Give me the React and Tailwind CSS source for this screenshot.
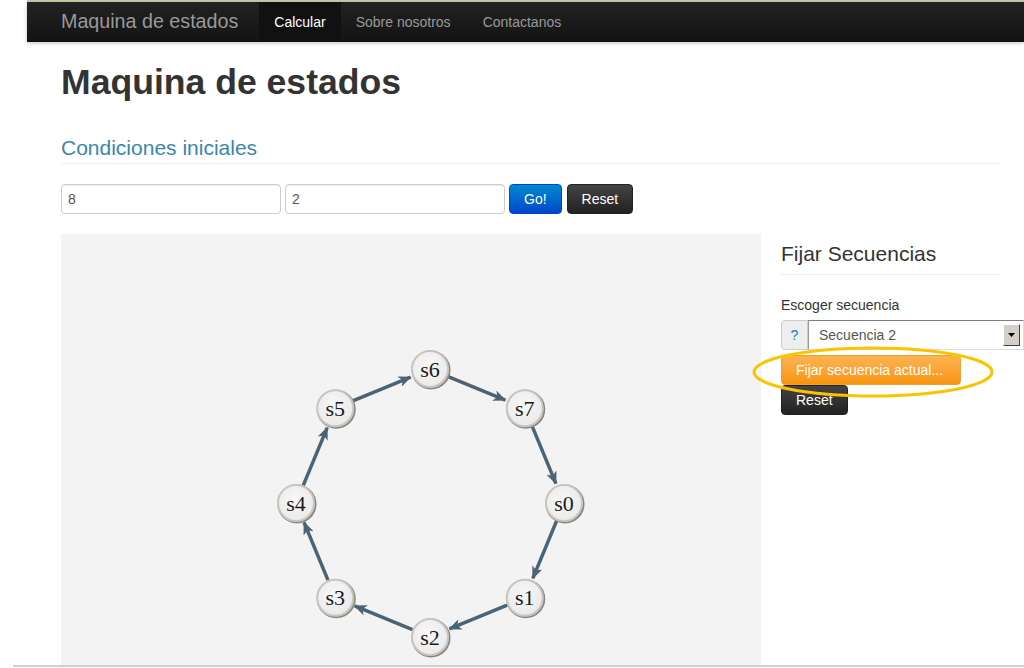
import React from 'react';

const nodes = [0, 1, 2, 3, 4, 5, 6, 7].map((k) => {
  const a = (k * Math.PI) / 4;
  return { id: k, x: 369 + 134 * Math.cos(a), y: 269 + 134 * Math.sin(a) };
});

const StateGraph = () => {
  const edges = nodes.map((n, i) => {
    const m = nodes[(i + 1) % nodes.length];
    const dx = m.x - n.x;
    const dy = m.y - n.y;
    const len = Math.sqrt(dx * dx + dy * dy);
    const ux = dx / len;
    const uy = dy / len;
    return {
      x1: n.x + ux * 19,
      y1: n.y + uy * 19,
      x2: m.x - ux * 21,
      y2: m.y - uy * 21,
    };
  });

  return (
    <svg width="700" height="431" viewBox="0 0 700 431">
      <defs>
        <marker id="arrow" viewBox="0 0 13 11" refX="12" refY="5.5" markerWidth="13" markerHeight="11" markerUnits="userSpaceOnUse" orient="auto">
          <path d="M0,0 L13,5.5 L0,11 L3.5,5.5 z" fill="#4c6474" />
        </marker>
        <radialGradient id="nodeFill" cx="45%" cy="40%" r="65%">
          <stop offset="0%" stopColor="#f7f7f7" />
          <stop offset="100%" stopColor="#e9e9e9" />
        </radialGradient>
        <filter id="soft" x="-20%" y="-20%" width="140%" height="140%">
          <feGaussianBlur stdDeviation="0.6" />
        </filter>
      </defs>

      {/* edges */}
      {edges.map((e, i) => (
        <line
          key={i}
          x1={e.x1}
          y1={e.y1}
          x2={e.x2}
          y2={e.y2}
          stroke="#4c6474"
          strokeWidth="3.5"
          markerEnd="url(#arrow)"
          filter="url(#soft)"
        />
      ))}

      {/* nodes */}
      {nodes.map((n) => (
        <g key={n.id}>
          <circle cx={n.x + 1} cy={n.y + 1} r="18.5" fill="none" stroke="#8a8680" strokeWidth="2" />
          <circle cx={n.x} cy={n.y} r="18" fill="url(#nodeFill)" stroke="#c9c5be" strokeWidth="2" />
          <text
            x={n.x}
            y={n.y + 7.5}
            textAnchor="middle"
            fontSize="22"
            fill="#1a1a1a"
            style={{ fontFamily: '"Liberation Serif", "Times New Roman", serif' }}
          >
            s{n.id}
          </text>
        </g>
      ))}
    </svg>
  );
};

const App = () => {
  return (
    <div className="flex h-[668px] w-[1024px] flex-col overflow-hidden bg-white font-['Liberation_Sans',Arial,sans-serif] text-[14px] text-[#333]">
      <div className="flex h-[665px] flex-col pl-[27px]">
        {/* top strip */}
        <div className="h-[2px] bg-[#c7cdac]" />

        {/* Navbar */}
        <nav className="relative z-10 h-[40px] bg-gradient-to-b from-[#222] to-[#131313] shadow-[0_1px_4px_rgba(0,0,0,0.25)]">
          <div className="ml-[34px] flex h-full items-stretch">
            <a className="pr-[21px] pt-[9px] text-[19.7px] leading-[20px] text-[#999]">Maquina de estados</a>
            <ul className="flex">
              <li className="bg-[#111] px-[15px] pt-[10px] leading-[20px] text-white">Calcular</li>
              <li className="pl-[15px] pr-[17px] pt-[10px] leading-[20px] text-[#999]">Sobre nosotros</li>
              <li className="px-[15px] pt-[10px] leading-[20px] text-[#999]">Contactanos</li>
            </ul>
          </div>
        </nav>

        {/* Main Content */}
        <main className="flex-1 overflow-hidden pl-[34px]">
          <div className="w-[940px]">
            <h1 className="mt-[20px] text-[35.6px] font-bold leading-[40px] text-[#333]">Maquina de estados</h1>

            <h2 className="mt-[34px] border-b border-[#eee] pb-[3px] text-[21px] leading-[24px] text-[#3a87ad]">
              Condiciones iniciales
            </h2>

            {/* Inputs */}
            <div className="mt-[20px] flex h-[30px] gap-[4px]">
              <input
                type="text"
                defaultValue="8"
                className="h-[30px] w-[220px] rounded-[4px] border border-[#ccc] px-[6px] text-[14px] text-[#555] shadow-[inset_0_1px_1px_rgba(0,0,0,0.075)] outline-none"
              />
              <input
                type="text"
                defaultValue="2"
                className="h-[30px] w-[220px] rounded-[4px] border border-[#ccc] px-[6px] text-[14px] text-[#555] shadow-[inset_0_1px_1px_rgba(0,0,0,0.075)] outline-none"
              />
              <button className="h-[30px] rounded-[4px] border border-[#0044cc] bg-gradient-to-b from-[#0088cc] to-[#0044cc] px-[14px] leading-[20px] text-white">
                Go!
              </button>
              <button className="ml-[1px] h-[30px] rounded-[4px] border border-[#222] bg-gradient-to-b from-[#444] to-[#222] px-[14px] leading-[20px] text-white">
                Reset
              </button>
            </div>

            <div className="mt-[20px] flex gap-[20px]">
              {/* Graph */}
              <div className="h-[431px] w-[700px] shrink-0 bg-[#f3f3f3]">
                <StateGraph />
              </div>

              {/* Sidebar */}
              <div className="relative w-[220px] shrink-0 pt-[8px]">
                <h3 className="text-[21px] leading-[24px] text-[#333]">Fijar Secuencias</h3>
                <hr className="mt-[8px] border-t border-[#eee]" />

                <label className="mt-[20px] block leading-[20px] text-[#333]">Escoger secuencia</label>
                <div className="mt-[5px] flex h-[30px]">
                  <span className="flex h-[30px] w-[27px] shrink-0 items-center justify-center rounded-l-[4px] border border-[#ccc] bg-[#eee] text-[#0088cc]">
                    ?
                  </span>
                  <div className="relative flex h-[30px] w-[216px] shrink-0 items-center border border-t-[#7f7f7f] border-l-[#9a9a9a] border-r-[#ddd] border-b-[#ddd] bg-white pl-[10px] text-[#555]">
                    Secuencia 2
                    <span className="absolute right-[3px] top-[3px] flex h-[22px] w-[17px] items-center justify-center border border-t-[#fff] border-l-[#fff] border-r-[#404040] border-b-[#404040] bg-[#d4d0c8]">
                      <svg width="7" height="4" viewBox="0 0 7 4">
                        <path d="M0,0 L7,0 L3.5,4 z" fill="#000" />
                      </svg>
                    </span>
                  </div>
                </div>

                <div className="mt-[5px] flex flex-col items-start">
                  <button className="h-[30px] w-[180px] rounded-[4px] border border-[#f0a030] bg-gradient-to-b from-[#fbb450] to-[#f89406] px-[14px] text-left leading-[20px] text-white">
                    Fijar secuencia actual...
                  </button>
                  <button className="h-[30px] rounded-[4px] border border-[#222] bg-gradient-to-b from-[#444] to-[#222] px-[14px] leading-[20px] text-white">
                    Reset
                  </button>
                </div>

                {/* highlight annotation */}
                <svg className="pointer-events-none absolute left-[-30px] top-[110px]" width="246" height="56" viewBox="0 0 246 56">
                  <ellipse cx="122" cy="28" rx="119" ry="24" fill="none" stroke="#fbc400" strokeWidth="3" />
                </svg>
              </div>
            </div>
          </div>
        </main>
      </div>
      <div className="ml-[13px] h-[2px] bg-[#cfcfcf]" />
    </div>
  );
};

export default App;
